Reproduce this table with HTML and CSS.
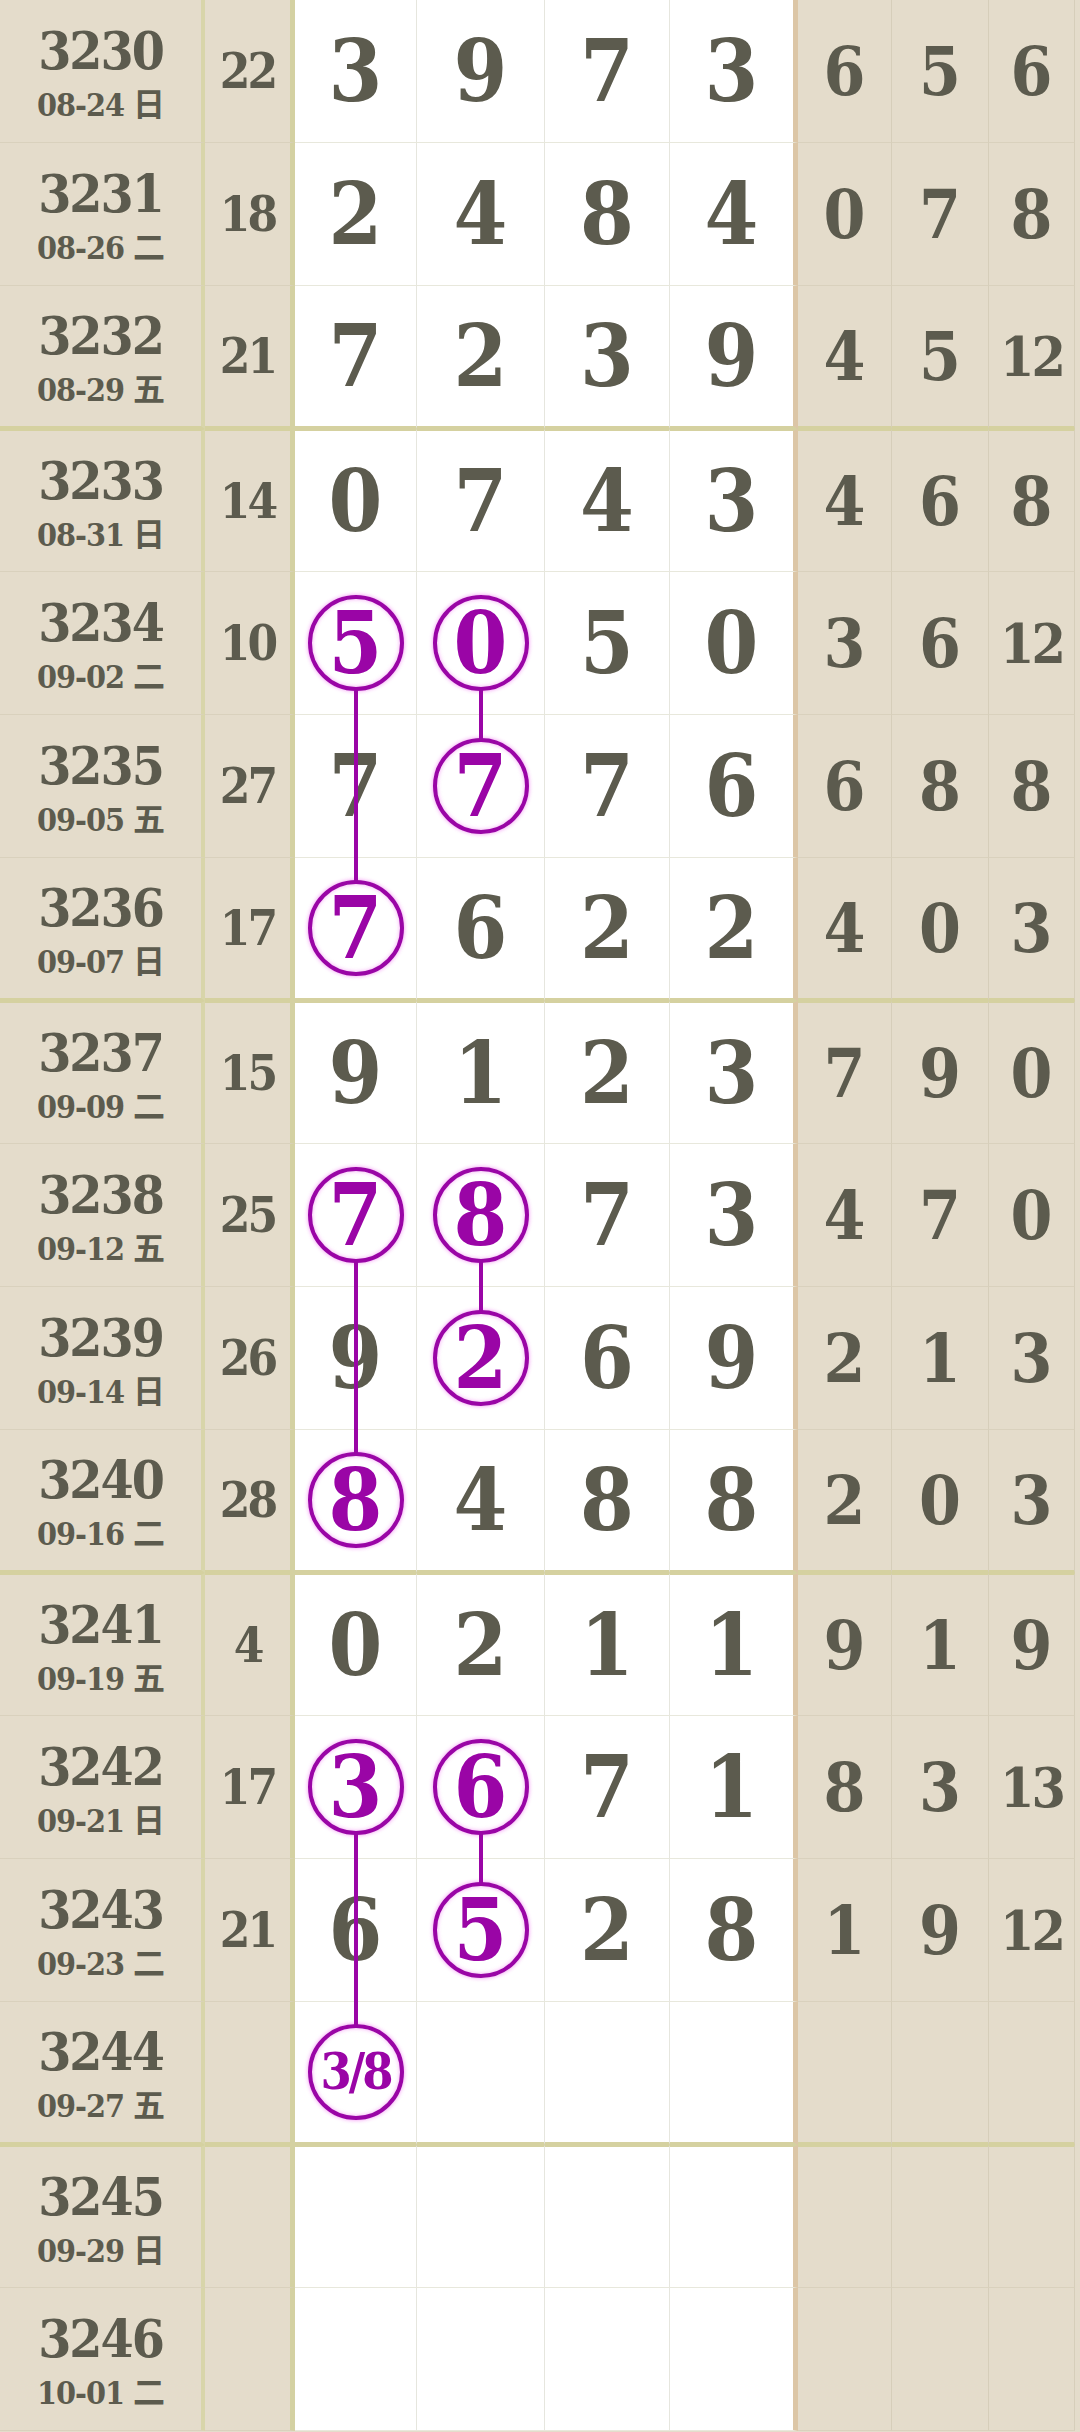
FILE: index.html
```html
<!DOCTYPE html>
<html lang="zh">
<head>
<meta charset="UTF-8">
<meta name="viewport" content="width=device-width, initial-scale=1">
<title>走势图</title>
<link rel="stylesheet" href="styles.css">
</head>
<body>
<div class="chart">
  <div class="row">
    <div class="no"><b>3230</b><small>08-24 日</small></div>
    <div class="sum">22</div>
    <div class="d">3</div><div class="d">9</div><div class="d">7</div><div class="d d4">3</div>
    <div class="r">6</div><div class="r">5</div><div class="r end">6</div>
  </div>
  <div class="row">
    <div class="no"><b>3231</b><small>08-26 二</small></div>
    <div class="sum">18</div>
    <div class="d">2</div><div class="d">4</div><div class="d">8</div><div class="d d4">4</div>
    <div class="r">0</div><div class="r">7</div><div class="r end">8</div>
  </div>
  <div class="row ge">
    <div class="no"><b>3232</b><small>08-29 五</small></div>
    <div class="sum">21</div>
    <div class="d">7</div><div class="d">2</div><div class="d">3</div><div class="d d4">9</div>
    <div class="r">4</div><div class="r">5</div><div class="r end two">12</div>
  </div>
  <div class="row gs">
    <div class="no"><b>3233</b><small>08-31 日</small></div>
    <div class="sum">14</div>
    <div class="d">0</div><div class="d">7</div><div class="d">4</div><div class="d d4">3</div>
    <div class="r">4</div><div class="r">6</div><div class="r end">8</div>
  </div>
  <div class="row">
    <div class="no"><b>3234</b><small>09-02 二</small></div>
    <div class="sum">10</div>
    <div class="d"><b class="c">5</b><i class="ln s2"></i></div><div class="d"><b class="c">0</b><i class="ln s1"></i></div><div class="d">5</div><div class="d d4">0</div>
    <div class="r">3</div><div class="r">6</div><div class="r end two">12</div>
  </div>
  <div class="row">
    <div class="no"><b>3235</b><small>09-05 五</small></div>
    <div class="sum">27</div>
    <div class="d">7</div><div class="d"><b class="c">7</b></div><div class="d">7</div><div class="d d4">6</div>
    <div class="r">6</div><div class="r">8</div><div class="r end">8</div>
  </div>
  <div class="row ge">
    <div class="no"><b>3236</b><small>09-07 日</small></div>
    <div class="sum">17</div>
    <div class="d"><b class="c">7</b></div><div class="d">6</div><div class="d">2</div><div class="d d4">2</div>
    <div class="r">4</div><div class="r">0</div><div class="r end">3</div>
  </div>
  <div class="row gs">
    <div class="no"><b>3237</b><small>09-09 二</small></div>
    <div class="sum">15</div>
    <div class="d">9</div><div class="d">1</div><div class="d">2</div><div class="d d4">3</div>
    <div class="r">7</div><div class="r">9</div><div class="r end">0</div>
  </div>
  <div class="row">
    <div class="no"><b>3238</b><small>09-12 五</small></div>
    <div class="sum">25</div>
    <div class="d"><b class="c">7</b><i class="ln s2"></i></div><div class="d"><b class="c">8</b><i class="ln s1"></i></div><div class="d">7</div><div class="d d4">3</div>
    <div class="r">4</div><div class="r">7</div><div class="r end">0</div>
  </div>
  <div class="row">
    <div class="no"><b>3239</b><small>09-14 日</small></div>
    <div class="sum">26</div>
    <div class="d">9</div><div class="d"><b class="c">2</b></div><div class="d">6</div><div class="d d4">9</div>
    <div class="r">2</div><div class="r">1</div><div class="r end">3</div>
  </div>
  <div class="row ge">
    <div class="no"><b>3240</b><small>09-16 二</small></div>
    <div class="sum">28</div>
    <div class="d"><b class="c">8</b></div><div class="d">4</div><div class="d">8</div><div class="d d4">8</div>
    <div class="r">2</div><div class="r">0</div><div class="r end">3</div>
  </div>
  <div class="row gs">
    <div class="no"><b>3241</b><small>09-19 五</small></div>
    <div class="sum">4</div>
    <div class="d">0</div><div class="d">2</div><div class="d">1</div><div class="d d4">1</div>
    <div class="r">9</div><div class="r">1</div><div class="r end">9</div>
  </div>
  <div class="row">
    <div class="no"><b>3242</b><small>09-21 日</small></div>
    <div class="sum">17</div>
    <div class="d"><b class="c">3</b><i class="ln s2"></i></div><div class="d"><b class="c">6</b><i class="ln s1"></i></div><div class="d">7</div><div class="d d4">1</div>
    <div class="r">8</div><div class="r">3</div><div class="r end two">13</div>
  </div>
  <div class="row">
    <div class="no"><b>3243</b><small>09-23 二</small></div>
    <div class="sum">21</div>
    <div class="d">6</div><div class="d"><b class="c">5</b></div><div class="d">2</div><div class="d d4">8</div>
    <div class="r">1</div><div class="r">9</div><div class="r end two">12</div>
  </div>
  <div class="row ge">
    <div class="no"><b>3244</b><small>09-27 五</small></div>
    <div class="sum"></div>
    <div class="d"><b class="c guess">3/8</b></div><div class="d"></div><div class="d"></div><div class="d d4"></div>
    <div class="r"></div><div class="r"></div><div class="r end"></div>
  </div>
  <div class="row gs">
    <div class="no"><b>3245</b><small>09-29 日</small></div>
    <div class="sum"></div>
    <div class="d"></div><div class="d"></div><div class="d"></div><div class="d d4"></div>
    <div class="r"></div><div class="r"></div><div class="r end"></div>
  </div>
  <div class="row">
    <div class="no"><b>3246</b><small>10-01 二</small></div>
    <div class="sum"></div>
    <div class="d"></div><div class="d"></div><div class="d"></div><div class="d d4"></div>
    <div class="r"></div><div class="r"></div><div class="r end"></div>
  </div>
</div>
</body>
</html>
```

FILE: styles.css
```css
body {
	margin: 0;
	background: #e4dccb;
	color: #5c5b4e;
	font-family: "DejaVu Serif Condensed", "DejaVu Serif", "Noto Sans CJK SC", serif;
	font-stretch: condensed;
	font-weight: bold;
}

.row {
	display: grid;
	grid-template-columns: 205px 90px 122px 128px 125px 128px 94px 97px 86px;
	height: 143px;
	padding-right: 5px;
}
.row > div {
	box-sizing: border-box;
	border-bottom: 1px solid #d9d1bd;
	display: flex;
	align-items: center;
	justify-content: center;
	position: relative;
}
/* group lines every 4 draws */
.row.ge > div {
	border-bottom: 3px solid #d5d1a0;
}
.row.gs > div {
	border-top: 2px solid #d5d1a0;
}

.no {
	flex-direction: column;
	border-right: 4px solid #d8d5aa;
	padding-top: 4px;
}
.no b {
	font-size: 53px;
	line-height: 52px;
	letter-spacing: -2px;
}
.no small {
	font-size: 32px;
	line-height: 34px;
	margin-top: 12px;
	letter-spacing: -1px;
}

.sum {
	border-right: 5px solid #d4d1a2;
	font-size: 49px;
	letter-spacing: -3px;
}

.d {
	background: #fff;
	border-right: 1px solid #e6e6de;
	font-size: 86px;
	line-height: 1;
}
.row > .d {
	border-bottom-color: #e8e8dc;
}
.row > .d4 {
	border-right: 5px solid #dcc6a6;
}

.r {
	border-right: 1px solid #d6ceba;
	font-size: 67px;
}
.r.two {
	font-size: 55px;
	letter-spacing: -3px;
}

/* circled hits */
.c {
	box-sizing: border-box;
	width: 96px;
	height: 96px;
	border: 4px solid #9a05a6;
	border-radius: 50%;
	color: #9a05a6;
	display: flex;
	align-items: center;
	justify-content: center;
	box-shadow: 0 0 4px rgba(230, 0, 230, 0.45), inset 0 0 4px rgba(230, 0, 230, 0.35);
}
.c.guess {
	font-size: 50px;
	letter-spacing: -3px;
}
.ln {
	position: absolute;
	left: calc(50% - 2px);
	top: calc(50% + 46px);
	width: 4px;
	background: #9a05a6;
	z-index: 1;
}
.s1 {
	height: 51px;
}
.s2 {
	height: 194px;
}
```
